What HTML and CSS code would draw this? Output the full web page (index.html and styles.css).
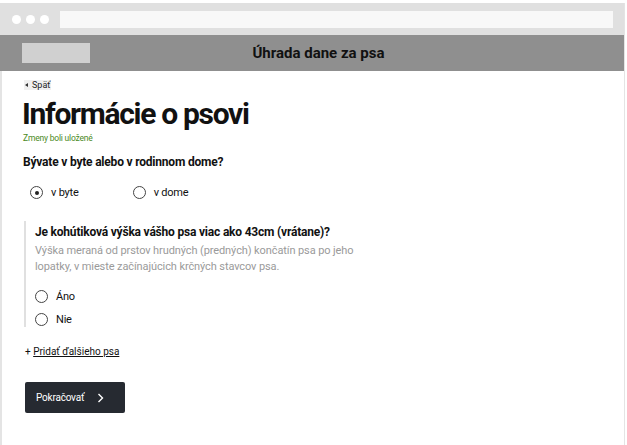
FILE: index.html
```html
<!DOCTYPE html>
<html lang="sk">
<head>
<meta charset="utf-8">
<title>Úhrada dane za psa</title>
<link rel="stylesheet" href="styles.css">
</head>
<body>
<div class="window">
  <div class="chrome">
    <div class="dots"><span class="dot"></span><span class="dot"></span><span class="dot"></span></div>
    <div class="address"></div>
  </div>
  <header class="appbar">
    <div class="logo"></div>
    <div class="apptitle">Úhrada dane za psa</div>
  </header>
  <main class="content">
    <a class="back" href="#"><span class="tri"></span>Späť</a>
    <h1 class="heading">Informácie o psovi</h1>
    <p class="saved">Zmeny boli uložené</p>
    <p class="question">Bývate v byte alebo v rodinnom dome?</p>
    <div class="radios-inline">
      <label class="radio"><span class="circle checked"></span>v byte</label>
      <label class="radio"><span class="circle"></span>v dome</label>
    </div>
    <section class="nested">
      <p class="question">Je kohútiková výška vášho psa viac ako 43cm (vrátane)?</p>
      <p class="hint">Výška meraná od prstov hrudných (predných) končatín psa po jeho lopatky, v mieste začínajúcich krčných stavcov psa.</p>
      <div class="radios-stack">
        <label class="radio"><span class="circle"></span>Áno</label>
        <label class="radio"><span class="circle"></span>Nie</label>
      </div>
    </section>
    <p class="add">+ <a href="#">Pridať ďalšieho psa</a></p>
    <button class="btn">Pokračovať
      <svg class="chev" width="7" height="10" viewBox="0 0 7 10"><path d="M1.5 1 L5.5 5 L1.5 9" fill="none" stroke="#fff" stroke-width="1.4"/></svg>
    </button>
  </main>
</div>
</body>
</html>
```
FILE: styles.css
```css
html, body { margin: 0; padding: 0; background: #fff; }
body { font-family: Roboto, "Liberation Sans", sans-serif; color: #111; }
.window {
  margin-top: 3px;
  width: 625px;
  height: 442px;
  box-sizing: border-box;
  border-left: 2px solid #e4e4e4;
  border-right: 1px solid #e4e4e4;
}
.chrome {
  height: 32px;
  background: #e0e0e0;
  display: flex;
  align-items: center;
  padding: 0 11px 0 12px;
  gap: 11px;
  margin-left: -2px;
}
.dots { display: flex; gap: 5px; }
.dot { width: 9px; height: 9px; border-radius: 50%; background: #fff; }
.address { flex: 1; height: 17px; background: #f8f8f8; }
.appbar {
  height: 36px;
  background: #8f8f8f;
  display: flex;
  align-items: center;
  padding-left: 22px;
  margin-left: -2px;
}
.logo { width: 68px; height: 20px; background: #d0d0d0; }
.apptitle {
  flex: 1;
  text-align: center;
  font-weight: 700;
  font-size: 15px;
  padding-right: 77px;
  color: #111;
}
.content { padding: 1px 0 0 20px; }
.back {
  display: inline-flex; align-items: center; gap: 2px;
  font-size: 9px; color: #222; text-decoration: none;
  margin-left: 2px; background: #f0f0f0; padding: 0 1px;
}
.tri { width: 0; height: 0; border-top: 2.5px solid transparent; border-bottom: 2.5px solid transparent; border-right: 3px solid #333; margin-right: 2px; }
.heading { margin: 6px 0 0; font-size: 30px; font-weight: 700; letter-spacing: -1.3px; line-height: 34px; }
.saved { margin: 2px 0 0 1px; font-size: 8.5px; color: #4b8a1e; letter-spacing: -0.2px; }
.question { margin: 12px 0 0 1px; font-size: 12px; line-height: 15px; font-weight: 700; letter-spacing: -0.2px; }
.radios-inline { display: flex; gap: 54px; margin: 16px 0 0 8px; }
.radio { display: flex; align-items: center; gap: 8px; font-size: 11px; letter-spacing: -0.2px; }
.circle {
  width: 11px; height: 11px; border: 1px solid #444; border-radius: 50%;
  display: inline-flex; align-items: center; justify-content: center; box-sizing: content-box;
}
.circle.checked::after { content: ""; width: 4px; height: 4px; border-radius: 50%; background: #222; }
.nested { margin: 22px 0 0 2px; border-left: 2px solid #e0e0e0; padding: 4px 0 0 9px; height: 106px; box-sizing: border-box; }
.nested .question { margin: 0; }
.hint { margin: 3px 0 0; font-size: 11px; color: #9a9a9a; line-height: 16px; width: 330px; letter-spacing: -0.1px; }
.radios-stack { display: flex; flex-direction: column; gap: 10px; margin-top: 15px; }
.add { margin: 19px 0 0 3px; font-size: 10px; }
.add a { color: #111; }
.btn {
  margin-top: 25px; margin-left: 3px;
  width: 100px; height: 31px; border: 0; border-radius: 2px;
  background: #262a31; color: #fff; font-family: inherit; font-size: 10px; letter-spacing: -0.2px;
  display: flex; align-items: center; gap: 13px; padding: 0 0 0 11px;
}
```
